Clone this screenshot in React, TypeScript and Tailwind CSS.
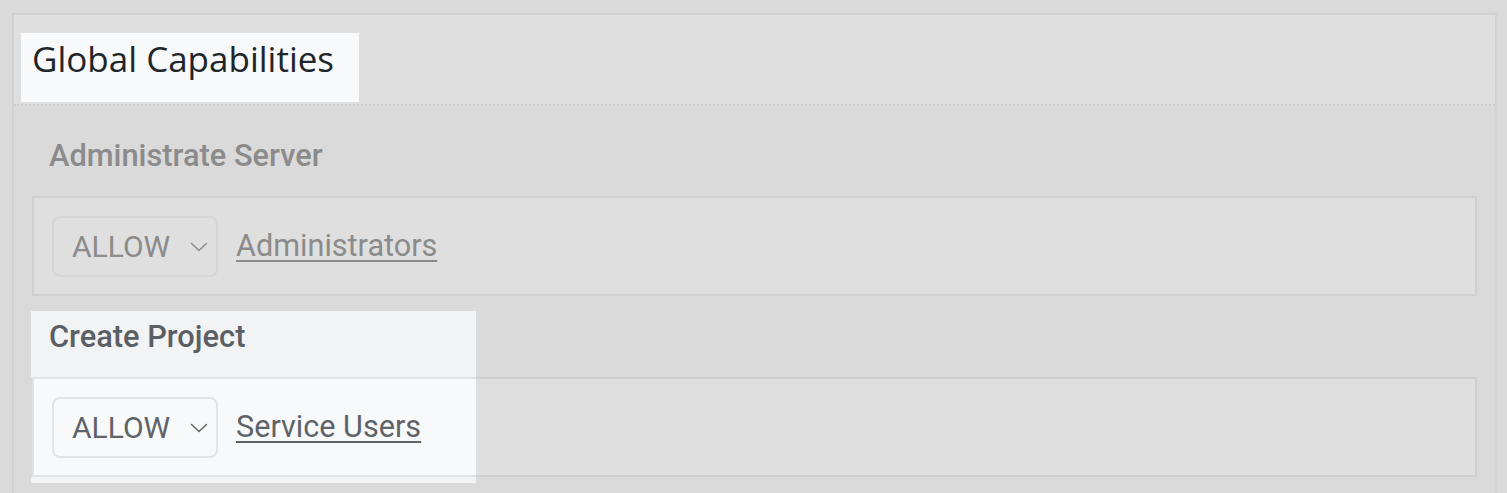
import React from "react";

const Chevron = ({ className }: { className?: string }) => (
  <svg width="18" height="10" viewBox="0 0 18 10" fill="none" className={className}>
    <path d="M1.5 1.5 9 8.5l7.5-7" stroke="currentColor" strokeWidth="1.5" strokeLinecap="round" strokeLinejoin="round" />
  </svg>
);

const Permission = ({ dim, group }: { dim?: boolean; group: string }) => {
  const text = dim ? "text-[#8b8b8b]" : "text-[#5f6368]";
  const selectClasses = dim
    ? "border-[#d5d5d5] bg-[#dfdfdf]"
    : "border-[#e2e3e5] bg-[#f8f9fa]";

  return (
    <div className="flex items-center gap-[18px]">
      {/* Rule select */}
      <div
        className={`flex h-[61px] w-[166px] items-center justify-between rounded-lg border-2 pl-[18px] pr-[8px] ${selectClasses} ${text}`}
      >
        <span className="text-[30px] leading-none">ALLOW</span>
        <Chevron />
      </div>
      <a href="#" className={`text-[30.6px] leading-none underline decoration-2 underline-offset-[4px] ${text}`}>
        {group}
      </a>
    </div>
  );
};

export default function App() {
  return (
    <div className="h-screen overflow-hidden bg-[#dadada] pl-[12px] pr-[10px] pt-[13px] font-['Roboto',sans-serif]">
      <div className="min-h-[520px] border-2 border-[#d1d1d1]">
        {/* Panel header */}
        <div className="border-b-2 border-dotted border-[#cbcbcb] bg-[#dfdfdf] pb-[2px] pl-[7px] pt-[18px]">
          <div className="h-[69px] w-[338px] bg-[#f8f9fb] pl-[11px] pt-[2px]">
            <h2 className="font-['Open_Sans',sans-serif] text-[35px] leading-[48px] text-[#212529]">
              Global Capabilities
            </h2>
          </div>
        </div>

        {/* Panel body */}
        <div className="px-[18px] pt-[27px]">
          {/* Administrate Server */}
          <h3 className="mb-[18px] pl-[17px] text-[30.8px] font-medium leading-[45px] text-[#8b8b8b]">
            Administrate Server
          </h3>
          <div className="border-2 border-[#d0d0d0] bg-[#dfdfdf] px-[18px] pb-[17px] pt-[18px]">
            <Permission dim group="Administrators" />
          </div>

          {/* Create Project (highlighted) */}
          <div className="-ml-px mt-[15px] w-[445px] bg-[#f2f3f5] pb-[18px] pl-[18px] pt-[3px]">
            <h3 className="text-[30.8px] font-medium leading-[45px] text-[#5b5f64]">Create Project</h3>
          </div>
          <div className="border-2 bg-[linear-gradient(to_right,#f8f9fa_442px,#dfdfdf_442px)] px-[18px] pb-[17px] pt-[18px] [border-image:linear-gradient(to_right,#e1e2e5_444px,#cfcfcf_444px)_1]">
            <Permission group="Service Users" />
          </div>
          <div className="-ml-px h-[6px] w-[445px] bg-[#f2f3f5]" />
        </div>
      </div>
    </div>
  );
}
